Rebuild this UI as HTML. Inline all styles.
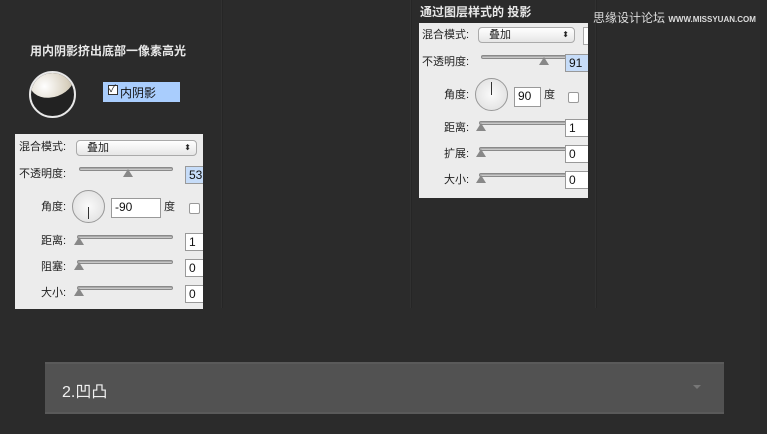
<!DOCTYPE html>
<html><head><meta charset="utf-8"><style>
*{margin:0;padding:0;box-sizing:border-box}
body{width:767px;height:434px;background:#2b2b2b;position:relative;overflow:hidden;font-family:"Liberation Sans","Noto Sans CJK SC",sans-serif;font-size:11px;color:#222}
.a{position:absolute}
.vl{position:absolute;top:0;height:308px;width:2px;background:#262626;border-left:1px solid #313131}
.panel{background:#ececec;overflow:hidden}
.lbl{position:absolute;font-size:11px;color:#222;line-height:13px}
.sl{position:absolute;height:4px;border-radius:2px;background:linear-gradient(#9a9a9a,#d8d8d8);border:1px solid #8a8a8a}
.th{position:absolute;width:0;height:0;border-left:5px solid transparent;border-right:5px solid transparent;border-bottom:8px solid #888}
.inp{position:absolute;height:18px;background:#fff;border:1px solid #999;font-size:12px;padding:1px 3px;color:#111;line-height:14px}
.sel{position:absolute;height:16px;border:1px solid #aaa;border-radius:4px;background:linear-gradient(#fff,#e6e6e6);font-size:11px;padding:0 10px;line-height:14px}
.dial{position:absolute;border-radius:50%;border:1px solid #999;background:radial-gradient(#fafafa,#dcdcdc)}
.cb{position:absolute;width:11px;height:11px;border:1px solid #999;border-radius:2px;background:#fff}
</style></head><body>
<div class="vl" style="left:221px"></div>
<div class="vl" style="left:410px"></div>
<div class="vl" style="left:595px"></div>

<div class="a" style="left:30px;top:42px;color:#e8e8e8;font-size:12px;font-weight:bold">用内阴影挤出底部一像素高光</div>
<div class="a" style="left:29px;top:71px;width:47px;height:47px;border-radius:50%;border:2px solid #e8e8e8;background:#222;overflow:hidden">
 <div class="a" style="left:-2px;top:-10px;width:46px;height:34px;border-radius:50%;background:radial-gradient(circle at 30% 60%,#fff,#d8d0bf 60%,#a89f8a);transform:rotate(-20deg)"></div>
</div>
<div class="a" style="left:103px;top:82px;width:77px;height:20px;background:#a9cdfd"></div>
<div class="a" style="left:108px;top:85px;width:10px;height:10px;border:1px solid #333;background:#fff;font-size:10px;line-height:8px">✓</div>
<div class="a" style="left:120px;top:84px;font-size:12px;color:#111">内阴影</div>

<div class="a panel" style="left:15px;top:134px;width:188px;height:175px">
 <div class="lbl" style="left:4px;top:7px">混合模式:</div>
 <div class="sel" style="left:61px;top:6px;width:121px">叠加<span style="position:absolute;right:5px;top:0;font-size:8px">⬍</span></div>
 <div class="lbl" style="left:4px;top:34px">不透明度:</div>
 <div class="sl" style="left:64px;top:33px;width:94px"></div><div class="th" style="left:108px;top:35px"></div>
 <div class="inp" style="left:170px;top:32px;width:26px;background:#c6dcf8">53</div>
 <div class="lbl" style="left:26px;top:67px">角度:</div>
 <div class="dial" style="left:57px;top:56px;width:33px;height:33px"><div class="a" style="left:15px;top:16px;width:1px;height:12px;background:#333"></div></div>
 <div class="inp" style="left:96px;top:64px;width:50px;height:20px">-90</div>
 <div class="lbl" style="left:149px;top:67px">度</div>
 <div class="cb" style="left:174px;top:69px"></div>
 <div class="lbl" style="left:26px;top:101px">距离:</div>
 <div class="sl" style="left:62px;top:101px;width:96px"></div><div class="th" style="left:59px;top:103px"></div>
 <div class="inp" style="left:170px;top:99px;width:26px">1</div>
 <div class="lbl" style="left:26px;top:127px">阻塞:</div>
 <div class="sl" style="left:62px;top:126px;width:96px"></div><div class="th" style="left:59px;top:128px"></div>
 <div class="inp" style="left:170px;top:125px;width:26px">0</div>
 <div class="lbl" style="left:26px;top:153px">大小:</div>
 <div class="sl" style="left:62px;top:152px;width:96px"></div><div class="th" style="left:59px;top:154px"></div>
 <div class="inp" style="left:170px;top:151px;width:26px">0</div>
</div>

<div class="a" style="left:420px;top:3px;color:#e8e8e8;font-size:12px;font-weight:bold">通过图层样式的 投影</div>
<div class="a" style="left:593px;top:9px;color:#ddd;font-size:12px">思缘设计论坛 <span style="font-size:8px;font-weight:bold">WWW.MISSYUAN.COM</span></div>

<div class="a panel" style="left:419px;top:23px;width:169px;height:175px">
 <div class="lbl" style="left:3px;top:6px">混合模式:</div>
 <div class="sel" style="left:59px;top:4px;width:97px">叠加<span style="position:absolute;right:5px;top:0;font-size:8px">⬍</span></div>
 <div class="a" style="left:164px;top:4px;width:10px;height:18px;border:1px solid #aaa;background:#fff"></div>
 <div class="lbl" style="left:3px;top:33px">不透明度:</div>
 <div class="sl" style="left:62px;top:32px;width:90px"></div><div class="th" style="left:120px;top:34px"></div>
 <div class="inp" style="left:146px;top:31px;width:30px;background:#c6dcf8">91</div>
 <div class="lbl" style="left:25px;top:66px">角度:</div>
 <div class="dial" style="left:56px;top:55px;width:33px;height:33px"><div class="a" style="left:15px;top:3px;width:1px;height:13px;background:#333"></div></div>
 <div class="inp" style="left:95px;top:64px;width:27px;height:20px">90</div>
 <div class="lbl" style="left:125px;top:66px">度</div>
 <div class="cb" style="left:149px;top:69px"></div>
 <div class="lbl" style="left:25px;top:99px">距离:</div>
 <div class="sl" style="left:60px;top:98px;width:93px"></div><div class="th" style="left:57px;top:100px"></div>
 <div class="inp" style="left:146px;top:96px;width:30px">1</div>
 <div class="lbl" style="left:25px;top:125px">扩展:</div>
 <div class="sl" style="left:60px;top:124px;width:93px"></div><div class="th" style="left:57px;top:126px"></div>
 <div class="inp" style="left:146px;top:122px;width:30px">0</div>
 <div class="lbl" style="left:25px;top:151px">大小:</div>
 <div class="sl" style="left:60px;top:150px;width:93px"></div><div class="th" style="left:57px;top:152px"></div>
 <div class="inp" style="left:146px;top:148px;width:30px">0</div>
</div>

<div class="a" style="left:45px;top:362px;width:679px;height:52px;background:#525252;border-top:2px solid #5a5a5a;border-bottom:2px solid #5a5a5a"></div>
<div class="a" style="left:62px;top:378px;color:#f0f0f0;font-size:16px">2.凹凸</div>
<div class="a" style="left:693px;top:385px;width:0;height:0;border-left:4px solid transparent;border-right:4px solid transparent;border-top:4px solid #777"></div>
</body></html>
